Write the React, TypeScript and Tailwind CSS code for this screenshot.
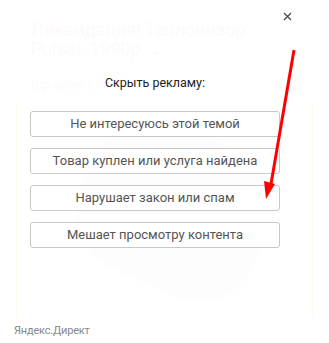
import React from "react";

const reasons = [
  "Не интересуюсь этой темой",
  "Товар куплен или услуга найдена",
  "Нарушает закон или спам",
  "Мешает просмотру контента",
];

export default function App() {
  return (
    <div
      className="relative w-[329px] h-[343px] bg-white overflow-hidden"
      style={{ fontFamily: "Roboto, 'Liberation Sans', sans-serif" }}
    >
      {/* faded ad underneath the overlay */}
      <div className="flex flex-col h-full pt-[20px] pb-[4px] px-[14px]">
        <div className="pl-[17px] text-[18px] leading-[19px] text-[#fefafa]">
          Ликвидация! Тепловизор
          <br />
          Pulsar. 1990р. <span className="text-[14px]">⌄</span>
        </div>
        <div className="pl-[17px] mt-[15px] text-[13px] text-[#fafbfd]">top-seller.c</div>
        <div className="mx-[2px] mt-[6px] flex-1 border-x border-[#fefbee] flex items-center justify-center">
          <div className="w-[190px] h-[160px] rounded-[60px] bg-[#fdfdfd] rotate-[25deg] translate-x-[10px]" />
        </div>
        <div className="mt-[6px] text-[11px] text-[#888] tracking-[-0.2px]">Яндекс.Директ</div>
      </div>

      {/* hide-ad overlay */}
      <div className="absolute inset-x-0 top-0 flex flex-col">
        <div className="flex justify-end pt-[10px] pr-[36px]">
          <button className="w-[12px] h-[12px] flex items-center justify-center text-[#444]">
            <svg width="9" height="9" viewBox="0 0 9 9" stroke="currentColor" strokeWidth="1.2">
              <path d="M1 1L8 8M8 1L1 8" />
            </svg>
          </button>
        </div>
        <div className="mt-[52px] ml-[30px] w-[250px] flex flex-col items-center">
          <div className="text-[12.5px] leading-[18px] text-[#222]">Скрыть рекламу:</div>
          <div className="mt-[19px] w-full flex flex-col gap-[11px]">
            {reasons.map((r) => (
              <button
                key={r}
                className="w-full h-[26px] rounded-[3px] border border-[#c8c8c8] bg-white text-[13px] text-[#555]"
              >
                {r}
              </button>
            ))}
          </div>
        </div>
      </div>

      {/* red annotation arrow */}
      <svg className="absolute left-0 top-0 pointer-events-none" width="329" height="343">
        <line x1="294" y1="50" x2="271" y2="184" stroke="#ff0000" strokeWidth="3" />
        <polygon points="264,181 275,184 266,199" fill="#ff0000" />
      </svg>
    </div>
  );
}
